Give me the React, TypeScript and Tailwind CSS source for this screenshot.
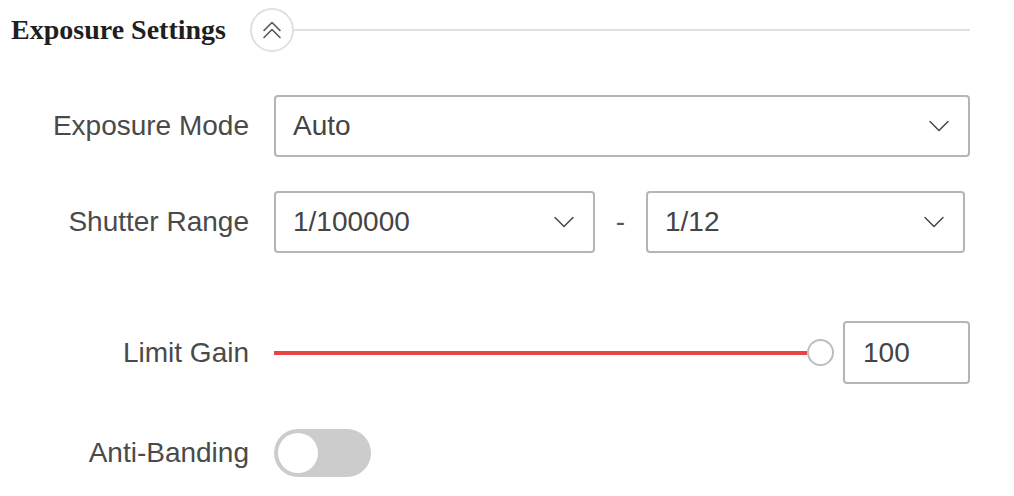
import { ChevronDown } from 'lucide-react';

const sans = { fontFamily: '"Liberation Sans", Arial, sans-serif' };

function Select({ value, className }: { value: string; className: string }) {
  return (
    <div
      className={`flex h-[62px] items-center justify-between rounded-[4px] border-2 border-[#b5b5b5] pl-[17px] pr-[11px] text-[28px] text-[#444] ${className}`}
    >
      <span>{value}</span>
      <ChevronDown className="h-[36px] w-[36px] text-[#444]" strokeWidth={0.95} />
    </div>
  );
}

function Row({ label, children, className }: { label: string; children: React.ReactNode; className: string }) {
  return (
    <div className={`flex items-center ${className}`}>
      <div className="w-[249px] shrink-0 text-right text-[28px] text-[#4a4a4a]">{label}</div>
      <div className="ml-[25px] flex flex-1 items-center">{children}</div>
    </div>
  );
}

export default function App() {
  return (
    <div className="h-[496px] w-[1014px] bg-white" style={sans}>
      <div className="w-[970px]">
        <div className="mt-[8px] flex h-[44px] items-center pl-[11px]">
          <h2
            className="text-[28px] font-bold text-[#1f1f1f]"
            style={{ fontFamily: '"Liberation Serif", "Times New Roman", serif' }}
          >
            Exposure Settings
          </h2>
          <div className="ml-[24px] flex h-[44px] w-[44px] items-center justify-center rounded-full border-2 border-[#e0e0e0]">
            <svg width="20" height="18" viewBox="0 0 20 18" fill="none" stroke="#555" strokeWidth="1.6" strokeLinecap="round" strokeLinejoin="round">
              <polyline points="2,9.5 10,1.5 18,9.5" />
              <polyline points="2,16.5 10,8.5 18,16.5" />
            </svg>
          </div>
          <div className="h-[2px] flex-1 bg-[#e0e0e0]" />
        </div>

        <Row label="Exposure Mode" className="mt-[43px]">
          <Select value="Auto" className="flex-1" />
        </Row>

        <Row label="Shutter Range" className="mt-[34px]">
          <Select value="1/100000" className="w-[321px]" />
          <span className="w-[51px] text-center text-[28px] text-[#555]">-</span>
          <Select value="1/12" className="w-[319px]" />
        </Row>

        <Row label="Limit Gain" className="mt-[68px]">
          <div className="flex h-[62px] flex-1 items-center">
            <div className="h-[4px] flex-1 bg-[#e64545]" />
            <div className="h-[27px] w-[27px] shrink-0 rounded-full border-2 border-[#bdbdbd] bg-white" />
          </div>
          <div className="ml-[9px] flex h-[63px] w-[127px] items-center rounded-[4px] border-2 border-[#b5b5b5] pl-[18px] text-[28px] text-[#444]">
            100
          </div>
        </Row>

        <Row label="Anti-Banding" className="mt-[45px]">
          <div className="flex h-[48px] w-[97px] items-center rounded-full bg-[#cccccc] px-[4px]">
            <div className="h-[40px] w-[40px] rounded-full bg-white" />
          </div>
        </Row>
      </div>
    </div>
  );
}
